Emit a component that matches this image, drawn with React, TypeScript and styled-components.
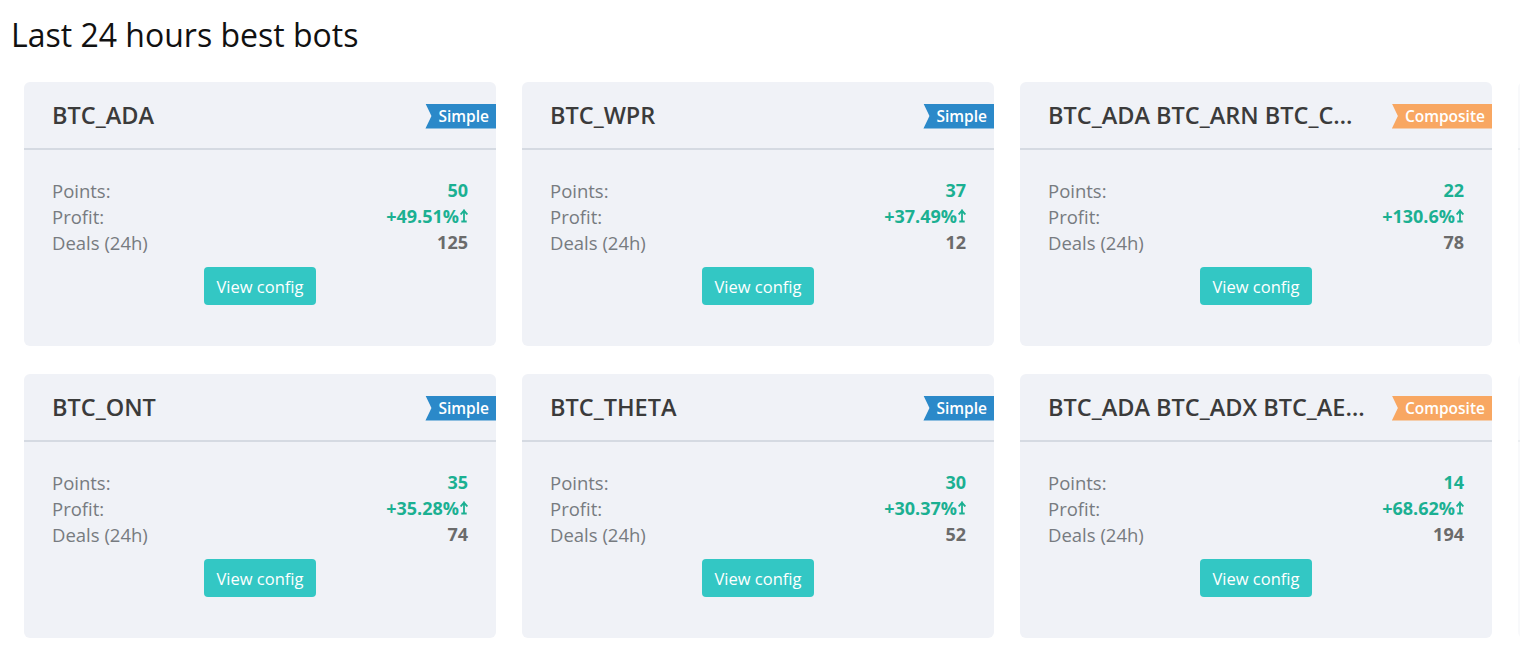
import React from "react";
import styled, { createGlobalStyle } from "styled-components";

const Global = createGlobalStyle`
  html, body { margin: 0; padding: 0; background: #ffffff; }
  body { font-family: "Open Sans", "Noto Sans", Arial, sans-serif; }
`;

const Page = styled.div`
  width: 1520px;
  height: 656px;
  overflow: hidden;
`;

const Title = styled.h1`
  margin: 0;
  padding: 14px 0 0 11px;
  font-size: 32px;
  line-height: 42px;
  font-weight: 400;
  color: #111;
`;

const Grid = styled.div`
  display: grid;
  grid-template-columns: repeat(4, 472px);
  column-gap: 26px;
  row-gap: 28px;
  padding: 26px 0 0 24px;
`;

const Card = styled.div<{ $faded?: boolean }>`
  background: #f0f2f7;
  border-radius: 6px;
  height: 264px;
  box-sizing: border-box;
  opacity: ${(p) => (p.$faded ? 0.45 : 1)};
`;

const Header = styled.div`
  display: flex;
  align-items: center;
  height: 66px;
  padding-left: 28px;
  border-bottom: 2px solid #d5dae2;
`;

const Name = styled.div`
  flex: 1;
  min-width: 0;
  font-size: 23.5px;
  font-weight: 600;
  color: #3b3b3b;
  white-space: nowrap;
  overflow: hidden;
  text-overflow: ellipsis;
  padding-right: 24px;
`;

const Badge = styled.div<{ $kind: "simple" | "composite" }>`
  flex: none;
  height: 25px;
  margin-top: 2px;
  padding: 0 7px 0 13px;
  display: flex;
  align-items: center;
  font-size: 15.5px;
  font-weight: 600;
  color: #fff;
  background: ${(p) => (p.$kind === "simple" ? "#2b89c9" : "#f8a762")};
  clip-path: polygon(0 0, 100% 0, 100% 100%, 0 100%, 6px 50%);
`;

const Body = styled.div`
  padding: 27px 28px 0 28px;
  display: flex;
  flex-direction: column;
`;

const Row = styled.div`
  display: flex;
  justify-content: space-between;
  align-items: center;
  height: 26px;
  font-size: 18.5px;
`;

const Label = styled.span`
  color: #777b80;
`;

const Value = styled.span<{ $green?: boolean }>`
  font-weight: 700;
  font-size: 18px;
  color: ${(p) => (p.$green ? "#1bb092" : "#6b6b6b")};
  display: inline-flex;
  align-items: center;
`;

const Button = styled.button`
  align-self: center;
  margin-top: 12px;
  width: 112px;
  height: 38px;
  border: none;
  border-radius: 4px;
  background: #33c7c4;
  color: #fff;
  font-family: inherit;
  font-size: 16.5px;
  font-weight: 400;
  cursor: pointer;
`;

const Arrow = () => (
  <svg width="8" height="14" viewBox="0 0 8 14" style={{ marginLeft: 1 }}>
    <path d="M4 1.5 V12.5 M4 1.5 L1.2 4.8 M4 1.5 L6.8 4.8 M2.2 12.5 H5.8" stroke="#1bb092" strokeWidth="1.8" fill="none" strokeLinecap="square" />
  </svg>
);

type Bot = {
  name: string;
  kind: "simple" | "composite";
  points: number;
  profit: string;
  deals: number;
};

const bots: Bot[] = [
  { name: "BTC_ADA", kind: "simple", points: 50, profit: "+49.51%", deals: 125 },
  { name: "BTC_WPR", kind: "simple", points: 37, profit: "+37.49%", deals: 12 },
  { name: "BTC_ADA BTC_ARN BTC_CDT BTC_ENG BTC_XVG", kind: "composite", points: 22, profit: "+130.6%", deals: 78 },
  { name: "BTC_LUN", kind: "simple", points: 22, profit: "+22.1%", deals: 40 },
  { name: "BTC_ONT", kind: "simple", points: 35, profit: "+35.28%", deals: 74 },
  { name: "BTC_THETA", kind: "simple", points: 30, profit: "+30.37%", deals: 52 },
  { name: "BTC_ADA BTC_ADX BTC_AEON BTC_AMB BTC_ARK", kind: "composite", points: 14, profit: "+68.62%", deals: 194 },
  { name: "BTC_POA", kind: "simple", points: 12, profit: "+12.4%", deals: 30 },
];

const BotCard = ({ bot, faded }: { bot: Bot; faded?: boolean }) => (
  <Card $faded={faded}>
    <Header>
      <Name>{bot.name}</Name>
      <Badge $kind={bot.kind}>{bot.kind === "simple" ? "Simple" : "Composite"}</Badge>
    </Header>
    <Body>
      <Row>
        <Label>Points:</Label>
        <Value $green>{bot.points}</Value>
      </Row>
      <Row>
        <Label>Profit:</Label>
        <Value $green>
          {bot.profit}
          <Arrow />
        </Value>
      </Row>
      <Row>
        <Label>Deals (24h)</Label>
        <Value>{bot.deals}</Value>
      </Row>
      <Button>View config</Button>
    </Body>
  </Card>
);

export default function App() {
  return (
    <Page>
      <Global />
      <Title>Last 24 hours best bots</Title>
      <Grid>
        {bots.map((b, i) => (
          <BotCard key={i} bot={b} faded={i % 4 === 3} />
        ))}
      </Grid>
    </Page>
  );
}
